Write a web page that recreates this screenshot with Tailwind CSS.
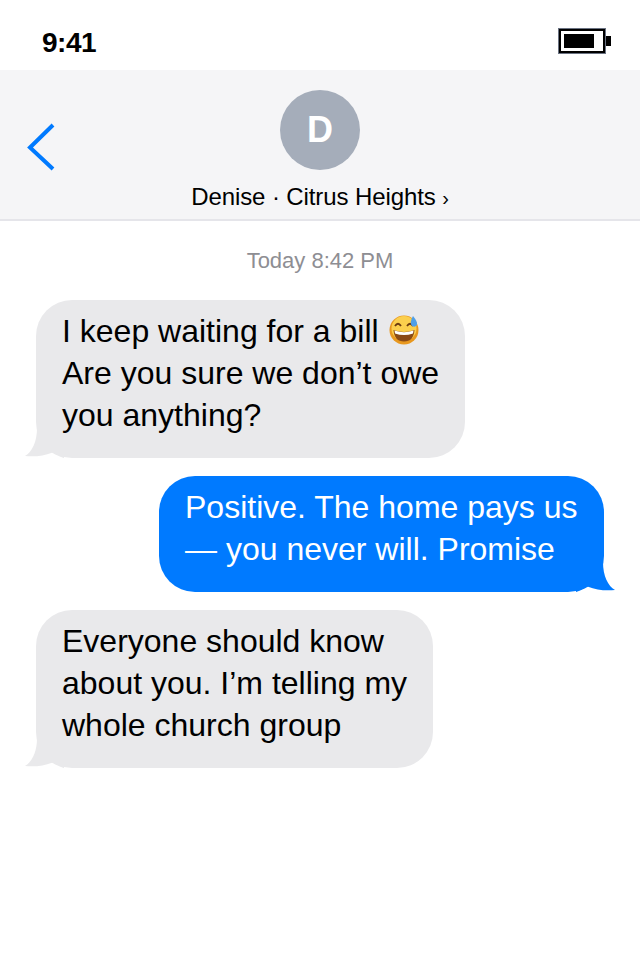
<!DOCTYPE html>
<html lang="en">
<head>
  <meta charset="UTF-8">
  <meta name="viewport" content="width=device-width, initial-scale=1.0">
  <title>Messages</title>
  <script src="https://cdn.jsdelivr.net/npm/@tailwindcss/browser@4"></script>
</head>
<body class="bg-white w-[640px] h-[980px] overflow-hidden font-['Liberation_Sans',Arial,sans-serif] text-black">

  <!-- Status bar -->
  <div class="h-[70px] flex items-center justify-between pl-[42px] pr-[29px] pt-[12px]">
    <span class="text-[28px] font-bold tracking-[-0.5px] mt-[4px]">9:41</span>
    <div class="flex items-center">
      <div class="w-[48px] h-[26px] border-[3px] border-black p-[3px] outline outline-1 -outline-offset-1 outline-gray-500">
        <div class="w-[30px] h-[14px] bg-black"></div>
      </div>
      <div class="w-[5px] h-[10px] bg-black"></div>
    </div>
  </div>

  <!-- Header -->
  <div class="relative h-[151px] bg-[#f5f5f7] border-b-2 border-[#e5e5ea] flex flex-col items-center pt-[20px]">
    <svg class="absolute left-[26px] top-[53px]" width="30" height="48" viewBox="0 0 30 48" fill="none">
      <path d="M27 2 L4 24.500 L27 46" stroke="#007aff" stroke-width="4"/>
    </svg>
    <div class="w-[80px] h-[80px] rounded-full bg-[#a5adba] flex items-center justify-center text-white text-[36px] font-bold">D</div>
    <div class="mt-[13px] text-[24px] leading-[28px] tracking-[-0.1px]">Denise · Citrus Heights <span class="text-[20px]">›</span></div>
  </div>

  <!-- Thread -->
  <div class="flex flex-col px-[36px]">
    <div class="text-center text-[22px] leading-[26px] text-[#8e8e93] mt-[27px] mb-[26px]">Today 8:42 PM</div>

    <div class="relative self-start bg-[#e9e9eb] rounded-[36px] px-[26px] pt-[10px] pb-[22px] text-[32px] leading-[42px] w-[429px] whitespace-nowrap">
      <svg class="absolute left-[-12px] bottom-0" width="40" height="30" viewBox="0 0 40 30">
        <path d="M13 0 C13 14 8 24 1 28 C10 29 20 28 28 24.700 C32 27 38 29.500 40 30 L40 0 Z" fill="#e9e9eb"/>
      </svg>
      <div class="relative">
        I keep waiting for a bill
        <svg class="inline-block align-[-3px] ml-[1px]" width="30" height="30" viewBox="0 0 30 30">
          <circle cx="15" cy="15" r="14.500" fill="#e8981f"/>
          <circle cx="15" cy="13.500" r="12.500" fill="#fbcf4d"/>
          <path d="M4.500 15 Q15 19 25.500 15 Q24.500 26.500 15 26.500 Q5.500 26.500 4.500 15 Z" fill="#8a4a16"/>
          <path d="M5.500 15.500 Q15 19 24.500 15.500 L24 18.500 Q15 21.500 6 18.500 Z" fill="#fff"/>
          <path d="M6 11 Q9 6.500 12 11 M18 11 Q21 6.500 24 11" fill="none" stroke="#6b3a10" stroke-width="1.800"/>
          <path d="M24 1 Q29 7 28 10 Q26 13 23 11 Q20 8 24 1 Z" fill="#4f9fe8"/>
        </svg>
        <br>Are you sure we don’t owe<br>you anything?
      </div>
    </div>

    <div class="relative self-end bg-[#007aff] text-white rounded-[36px] px-[26px] pt-[10px] pb-[22px] text-[32px] leading-[42px] mt-[18px] w-[445px] whitespace-nowrap">
      <svg class="absolute right-[-12px] bottom-0" width="40" height="30" viewBox="0 0 40 30">
        <path d="M27 0 C27 14 32 24 39 28 C30 29 20 28 12 24.700 C8 27 2 29.500 0 30 L0 0 Z" fill="#007aff"/>
      </svg>
      <div class="relative">Positive. The home pays us<br>— you never will. Promise</div>
    </div>

    <div class="relative self-start bg-[#e9e9eb] rounded-[36px] px-[26px] pt-[10px] pb-[22px] text-[32px] leading-[42px] mt-[18px] w-[397px] whitespace-nowrap">
      <svg class="absolute left-[-12px] bottom-0" width="40" height="30" viewBox="0 0 40 30">
        <path d="M13 0 C13 14 8 24 1 28 C10 29 20 28 28 24.700 C32 27 38 29.500 40 30 L40 0 Z" fill="#e9e9eb"/>
      </svg>
      <div class="relative">Everyone should know<br>about you. I’m telling my<br>whole church group</div>
    </div>
  </div>
</body>
</html>
